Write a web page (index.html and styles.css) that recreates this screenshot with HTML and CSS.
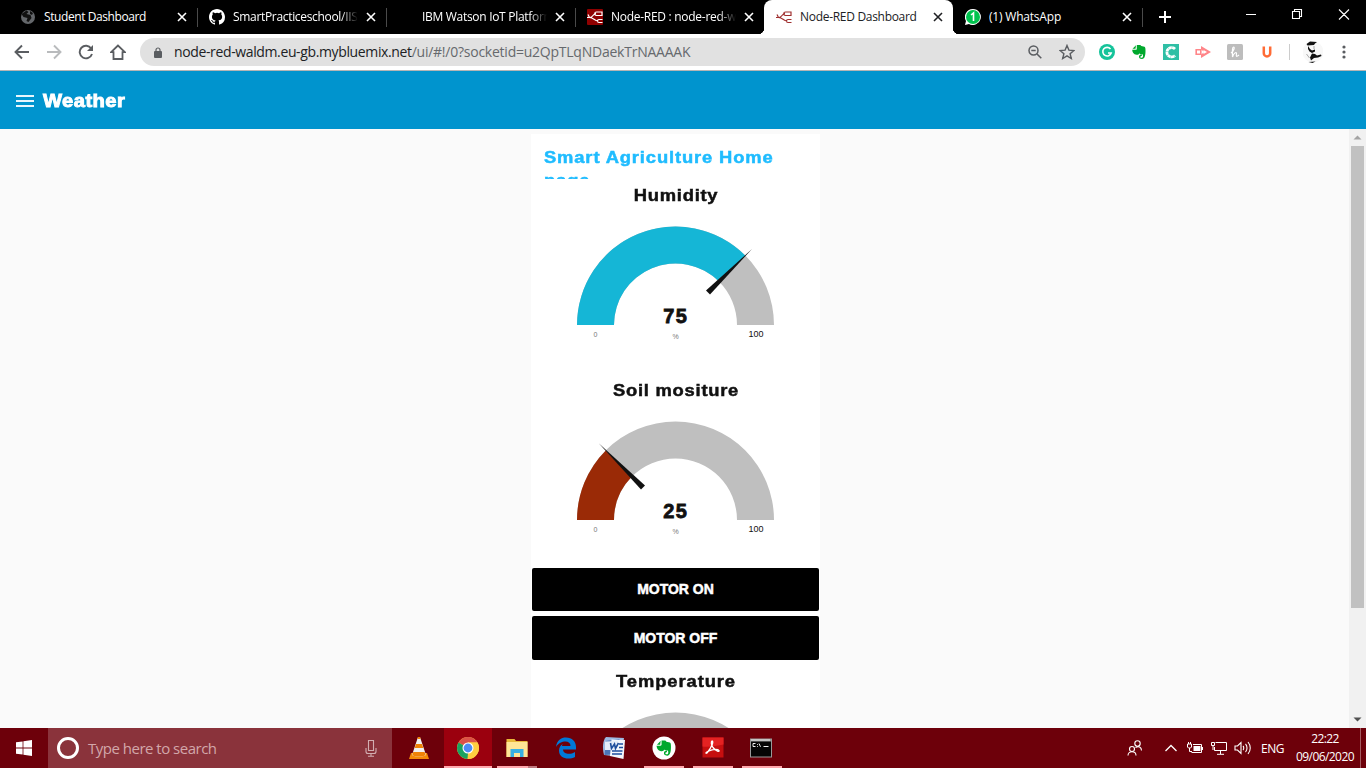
FILE: index.html
```html
<!DOCTYPE html>
<html lang="en">
<head>
<meta charset="utf-8">
<title>Node-RED Dashboard</title>
<link rel="stylesheet" href="styles.css">
</head>
<body>
<svg class="defs" width="0" height="0">
  <symbol id="x" viewBox="0 0 10 10"><path d="M1 1l8 8M9 1L1 9" stroke="currentColor" stroke-width="1.6" fill="none"/></symbol>
  <symbol id="nodered" viewBox="0 0 16 16"><path d="M0 8.500h3c3 0 3-4 6-4M1 5.500l1.500 3C7 8.500 7 12 11 12M9.500 3h5.500v3.500H9.500a1.750 1.750 0 010-3.500zM15.500 10.500H12a1.500 1.500 0 000 3h3.500" fill="none" stroke="currentColor" stroke-width="1.200"/></symbol>
  <symbol id="elephant" viewBox="0 0 16 16"><path d="M5 1.200L1.500 4.800h3zM5.800 1h3.500l1 1 3.200.8c.8.3 1 1.500 1 4 0 4-.5 8.200-3.500 8.200-2.500 0-3-1.200-3-2.400 0-1.500 1-2.100 2.800-2.100v1.400c-1 0-1.400.3-1.400 1s.5.800 1.300.8c1.100 0 1.300-.8 1.300-2 0-1-.3-1.500-.8-1.500-1.500 0-2.700-.2-3-1-.3 1-1 1.800-2.700 1.600C2.500 10.500 1.300 8 1.200 5.700h3.600c.7 0 1-.4 1-1z"/></symbol>
</svg>

<header class="tabs">
  <div class="tab">
    <svg class="fav" viewBox="0 0 16 16"><circle cx="8" cy="8" r="7" fill="#64676b"/><path d="M1.500 5l5-3.500 2 1.500-2 2 4 1 1 3-3 4-2-1 1-3-4-1zM10 2l3 2-1 2-2-1z" fill="#111"/></svg>
    <span class="label t1">Student Dashboard</span><svg class="close"><use href="#x"/></svg>
  </div>
  <div class="tab">
    <svg class="fav" viewBox="0 0 16 16"><path fill="#fff" d="M8 0C3.580 0 0 3.580 0 8c0 3.540 2.290 6.530 5.470 7.590.4.070.55-.17.55-.38v-1.490c-2.010.37-2.530-.49-2.690-.94-.09-.23-.48-.94-.82-1.130-.28-.15-.68-.52-.01-.53.63-.01 1.080.58 1.230.82.72 1.210 1.870.87 2.330.66.07-.52.28-.87.51-1.070-1.780-.2-3.640-.89-3.640-3.950 0-.87.31-1.590.82-2.150-.08-.2-.36-1.020.08-2.120 0 0 .67-.21 2.200.82a7.600 7.600 0 014 0c1.530-1.040 2.200-.82 2.200-.82.44 1.100.16 1.920.08 2.120.51.560.82 1.270.82 2.150 0 3.070-1.870 3.750-3.650 3.950.29.25.54.730.54 1.480v2.190c0 .21.150.460.55.380A8.010 8.010 0 0016 8c0-4.420-3.580-8-8-8z"/></svg>
    <span class="label fade t2">SmartPracticeschool/IISPS</span><svg class="close"><use href="#x"/></svg>
  </div>
  <div class="tab">
    <span class="fav"></span>
    <span class="label fade t3">IBM Watson IoT Platform</span><svg class="close"><use href="#x"/></svg>
  </div>
  <div class="tab last-before">
    <svg class="fav nr" viewBox="0 0 16 16"><rect width="16" height="16" rx="1" fill="#8f0000"/><use href="#nodered"/></svg>
    <span class="label fade t4">Node-RED : node-red-waldm</span><svg class="close"><use href="#x"/></svg>
  </div>
  <div class="tab active">
    <svg class="fav" viewBox="0 0 16 16"><use href="#nodered"/></svg>
    <span class="label t5">Node-RED Dashboard</span><svg class="close"><use href="#x"/></svg>
  </div>
  <div class="tab">
    <svg class="fav" viewBox="0 0 16 16"><path d="M8 0a8 8 0 11-4 15L0 16l1-4A8 8 0 018 0z" fill="#fff"/><circle cx="8" cy="8" r="7" fill="#00c34e"/><path d="M6 6l2.500-2v8" fill="none" stroke="#fff" stroke-width="1.600"/></svg>
    <span class="label t6">(1) WhatsApp</span><svg class="close"><use href="#x"/></svg>
  </div>
  <svg class="plus" viewBox="0 0 12 12"><path d="M6 0v12M0 6h12" stroke="#fff" stroke-width="2"/></svg>
  <svg class="winctl" viewBox="0 0 106 12"><g fill="none" stroke="#fff" stroke-width="1.100"><path d="M0 6.500h10M46.500 3.500h7v7h-7zM48.500 3.500v-2h7v7h-2M93 1.500l10 10M103 1.500l-10 10"/></g></svg>
</header>

<nav class="toolbar">
  <svg class="nav" viewBox="0 0 16 16"><path d="M15 8H2M8 1.500L1.500 8 8 14.500" fill="none" stroke="#5a5d61" stroke-width="1.900"/></svg>
  <svg class="nav" viewBox="0 0 16 16"><path d="M1 8h13M8 1.500L14.500 8 8 14.500" fill="none" stroke="#b9bbbd" stroke-width="1.900"/></svg>
  <svg class="nav" viewBox="0 0 16 16"><path d="M13.200 4.500A6.300 6.300 0 1014 10" fill="none" stroke="#5a5d61" stroke-width="1.900"/><path d="M15 1v6H9z" fill="#5a5d61"/></svg>
  <svg class="nav" viewBox="0 0 16 16"><path d="M8 1.500L1.200 8.200H3.500V15h9V8.200h2.300z" fill="none" stroke="#5a5d61" stroke-width="1.800"/></svg>
  <div class="omnibox">
    <svg class="lock" viewBox="0 0 8 11"><rect y="4" width="8" height="7" rx="1" fill="#5a5d61"/><path d="M2 4.500V3a2 2 0 014 0v1.500" fill="none" stroke="#5a5d61" stroke-width="1.200"/></svg>
    <span class="url"><b>node-red-waldm.eu-gb.mybluemix.net</b>/ui/#!/0?socketid=u2QpTLqNDaekTrNAAAAK</span>
    <svg class="zoomi" viewBox="0 0 14 14"><g fill="none" stroke="#5a5d61" stroke-width="1.500"><circle cx="5.500" cy="5.500" r="4.500"/><path d="M9 9l4.300 4.300M3.300 5.500h4.400"/></g></svg>
    <svg class="star" viewBox="0 0 16 16"><path d="M8 1.500l1.900 4.600 5 .4-3.800 3.200 1.200 4.800L8 11.900l-4.300 2.600 1.200-4.800L1.100 6.500l5-.4z" fill="none" stroke="#5a5d61" stroke-width="1.400"/></svg>
  </div>
  <div class="exts">
    <svg viewBox="0 0 16 16"><circle cx="8" cy="8" r="8" fill="#15c39a"/><path d="M11.500 5A4.300 4.300 0 1012.200 9H9" fill="none" stroke="#fff" stroke-width="1.600"/></svg>
    <svg viewBox="0 0 16 16" fill="#00a82d"><use href="#elephant"/></svg>
    <svg viewBox="0 0 16 16"><rect width="16" height="16" fill="#2fbfa5"/><path d="M12 5a4.700 4.700 0 100 6.500" fill="none" stroke="#fff" stroke-width="2.800" stroke-dasharray="3.200 .3"/></svg>
    <svg viewBox="0 0 16 16"><path d="M1.200 5.700h4.600v4.600H1.200z" fill="none" stroke="#ff8589" stroke-width="1.600"/><path d="M6 2l10 6-10 6v-3.500L9.500 8 6 5.500z" fill="#ff8589"/><path d="M8.500 6l3.500 2-3.500 2z" fill="#fff"/></svg>
    <svg viewBox="0 0 16 16"><rect width="16" height="16" rx="1.500" fill="#bdbdbd"/><path d="M4 9c3-2 4-6 2.500-6S5.500 9 5.500 13c1-4 4.500-6 4-3-.4 2-.6 3.500 2.500 1" fill="none" stroke="#fff" stroke-width="1.200"/></svg>
    <svg viewBox="0 0 16 16"><path d="M4.800 2.500v6.700a3.200 3.200 0 006.400 0V2.500" fill="none" stroke="#ff6b35" stroke-width="2.500"/></svg>
  </div>
  <span class="bar"></span>
  <svg class="avatar" viewBox="0 0 20 22"><circle cx="10" cy="11" r="10.500" fill="#f8f8f8"/><path d="M3.500 3L7 .500l7 .5-2 1.500-1 1.500-6.500.5zM5 5v3l1.500 2.500L9 12l3-1.500V8.500L9 9.500 7 8zM9 12.500l3 .5 2 1.500 4-1 .5 1.500-3.500 1.500-4 .5-3 2.500-1-3zM5.500 21l7-.5-3 1.500z" fill="#111"/><path d="M3.500 13l3 4M11 5v3" stroke="#aaa" fill="none"/></svg>
  <svg class="dots" viewBox="0 0 4 14"><g fill="#5a5d61"><circle cx="2" cy="2" r="1.600"/><circle cx="2" cy="7" r="1.600"/><circle cx="2" cy="12" r="1.600"/></g></svg>
</nav>

<div class="appbar">
  <svg class="burger" viewBox="0 0 18 12"><path d="M0 1h18M0 6h18M0 11h18" stroke="#e8f6fd" stroke-width="1.800"/></svg>
  <h1>Weather</h1>
</div>

<main class="content">
  <section class="card">
    <p class="cardtitle">Smart Agriculture Home page</p>
    <div class="gauge">
      <h2>Humidity</h2>
      <svg viewBox="0 0 289 150"><path class="track" d="M46 115a98.500 98.500 0 01197 0H206a61.500 61.500 0 00-123 0z"/><path fill="#15b6d6" d="M46 115A98.500 98.500 0 01214.200 45.400L188 71.500A61.500 61.500 0 0083 115z"/><path class="needle" d="M221 39L179 84.500l-4-4z"/>
      <text class="val" x="144.800" y="113">75</text><text class="unit" x="144.500" y="129">%</text><text class="min" x="64.500" y="127">0</text><text class="max" x="225" y="127">100</text></svg>
    </div>
    <div class="gauge">
      <h2>Soil mositure</h2>
      <svg viewBox="0 0 289 150"><path class="track" d="M46 115a98.500 98.500 0 01197 0H206a61.500 61.500 0 00-123 0z"/><path fill="#9a2a06" d="M46 115A98.500 98.500 0 0174.800 45.400L101 71.500A61.500 61.500 0 0083 115z"/><path class="needle" d="M68 38.500l46 42-4 4z"/>
      <text class="val" x="144.800" y="113">25</text><text class="unit" x="144.500" y="129">%</text><text class="min" x="64.500" y="127">0</text><text class="max" x="225" y="127">100</text></svg>
    </div>
    <button class="on">MOTOR ON</button>
    <button class="off">MOTOR OFF</button>
    <div class="gauge third">
      <h2>Temperature</h2>
      <svg viewBox="0 0 289 150"><path class="track" d="M46 115a98.500 98.500 0 01197 0H206a61.500 61.500 0 00-123 0z"/></svg>
    </div>
  </section>
  <div class="scroll">
    <svg viewBox="0 0 17 17"><path d="M4.500 10.500h8l-4-4z" fill="#a3a3a3"/></svg>
    <div class="thumb"></div>
    <svg viewBox="0 0 17 17"><path d="M4.500 6.500h8l-4 4z" fill="#505050"/></svg>
  </div>
</main>

<footer class="taskbar">
  <div class="start"><svg viewBox="0 0 16 16"><path d="M0 2.300L6.600 1.400v6.200H0zM7.400 1.300L16 0v7.600H7.400zM0 8.400h6.600v6.200L0 13.700zM7.400 8.400H16V16l-8.600-1.300z" fill="#fff"/></svg></div>
  <div class="search">
    <span class="ring"></span><span class="hint">Type here to search</span>
    <svg class="mic" viewBox="0 0 12 17"><path d="M3.500.5h5v10h-5zM1 8v3.500c0 1.500 1 2 2 2h6c1 0 2-.5 2-2V8M6 13.500v2.500M3 16.300h6" fill="none" stroke="#d2aeb1" stroke-width="1.100"/></svg>
  </div>
  <div class="apps">
    <div class="app"><svg viewBox="0 0 24 24"><path d="M4 17h16l2 6H2z" fill="#f58a07"/><path d="M11 1h2l6 18c-3 2-11 2-14 0z" fill="#f1f1f1"/><path d="M10.500 3L11 1h2l.6 2zM9 8h6l1.300 4H7.700zM6.300 16h11.300l1 3c-3 2-10.300 2-13.300 0z" fill="#f08206"/></svg></div>
    <div class="app current open"><svg viewBox="0 0 24 24"><circle cx="12" cy="12" r="11" fill="#ffcd40"/><path d="M12 12L2.500 6.500A11 11 0 0121.500 6.500H12z" fill="#db5148"/><path d="M2.500 6.500A11 11 0 0011.500 23L17 14.500 12 12z" fill="#1aa260"/><path d="M21.500 6.500H12V17L11.500 23A11 11 0 0021.500 6.500z" fill="#ffcd40"/><circle cx="12" cy="12" r="5.500" fill="#fff"/><circle cx="12" cy="12" r="4.400" fill="#4c8bf5"/></svg></div>
    <div class="app multi"><svg viewBox="0 0 24 24"><path d="M1.500 3h8l1.500 2h11.500v16h-21z" fill="#e9b93a"/><path d="M1.500 6h21v15h-21z" fill="#ffe596"/><path d="M5.500 21v-8h13v8h-3.500v-4H9v4z" fill="#38b0e3"/></svg></div>
    <div class="app"><svg viewBox="0 0 24 24"><path d="M2 11C3 4 7 1.500 12 1.500c6 0 10 4 10 9.500v2.500H9c.3 5 7.500 5.500 12 2.500v5c-6 3-16 2-16-6.500 0-3 1.700-5.500 4-6.800C8 8.800 8 10 8 10h8.500c0-3-2-4.500-5-4.500C8 5.500 4.500 7 2 11z" fill="#0078d7"/></svg></div>
    <div class="app word"><svg viewBox="0 0 24 24"><path d="M4 1l18 1-3 19-17-2C0 11 1 4 4 1z" fill="#9db8e0"/><path d="M3.500 5l14-2-1 15-14 1z" fill="#4a74b8"/><path d="M9.500 3.500L23 4l-1.500 19L8 20z" fill="#f2f6fc"/><path d="M3 5.500L16 5l-1.500 9L3 14z" fill="#e4ecf8"/><path d="M8.500 7l1 5.500L12.500 8l1 4.500L16.500 7M17 8h4M17 11.500h4M10 15h10.500M10 18h10" fill="none" stroke="#1c4d9d" stroke-width="1.600"/></svg></div>
    <div class="app open narrow"><svg viewBox="0 0 24 24"><circle cx="12" cy="12" r="11.500" fill="#fff"/><g transform="translate(3.300 3.500) scale(1.080)" fill="#00a82d"><use href="#elephant" width="16" height="16"/></g></svg></div>
    <div class="app open narrow"><svg viewBox="0 0 24 24"><path d="M1.500 1.500h21v20h-21z" fill="#c60f0f"/><path d="M1.500 1.500h21v7c-7 1-14 3-21 2z" fill="#e52222"/><path d="M11 5c2 0 0 6-5 12-2 1-1-1 2-2 4-2 9-2 10-.5s-3 1-6-3c-2-3-2-6-1-6.500z" fill="none" stroke="#fff" stroke-width="1.300"/></svg></div>
    <div class="app open narrow cmd"><svg viewBox="0 0 24 24"><path d="M1 2.500h22v19H1z" fill="#999"/><path d="M2 5.500h20V20.500H2z" fill="#050505"/><path d="M2 4h19" stroke="#eee"/><path d="M6.500 7.500H4v3h2.500M8.500 8v.8M8.500 10v.8M10 7.500l1.500 3.300M14.500 10.500h5" stroke="#eee" fill="none"/></svg></div>
  </div>
  <div class="tray">
    <svg class="people" viewBox="0 0 16 16"><g fill="none" stroke="#fff" stroke-width="1.100"><circle cx="10.500" cy="3.500" r="2.700"/><circle cx="5" cy="9" r="2.500"/><path d="M1 15.500c0-5 8-5 8 0M8.500 7.500c3-2 6-.5 6 3"/></g></svg>
    <svg class="chev" viewBox="0 0 14 14"><path d="M1.500 10L7 4.500l5.500 5.500" fill="none" stroke="#fff" stroke-width="1.300"/></svg>
    <svg class="bat" viewBox="0 0 16 14"><path d="M6 3.500h8.500v8H4.500" fill="none" stroke="#fff"/><path d="M6.500 5h7v5h-7zM15 6h1v3h-1z" fill="#fff"/><path d="M.5 3h4v3l-1 1h-2l-1-1zM1.500 1v2M3.500 1v2M2.500 7v3.500H5" fill="none" stroke="#fff"/></svg>
    <svg class="net" viewBox="0 0 16 14"><path d="M4.500 1.500h11v8h-12V6M9.500 10v3M6 13.300h7M.5 1.500h3v3h-3zM2 5v4" fill="none" stroke="#fff"/></svg>
    <svg class="vol" viewBox="0 0 18 14"><path d="M1 5h2.500L7 1.500v11L3.500 9H1zM9 5c1 1 1 3 0 4M11.500 3c2 2 2 6 0 8M14 1c3 3.500 3 8.500 0 12" fill="none" stroke="#fff" stroke-width="1.100"/></svg>
    <span class="eng">ENG</span>
    <div class="clock"><span class="time">22:22</span><span class="date">09/06/2020</span></div>
    <span class="peek"></span>
  </div>
</footer>
</body>
</html>
```
FILE: styles.css
```css
* { box-sizing: border-box; }
body { margin: 0; width: 1366px; height: 768px; overflow: hidden; display: flex; flex-direction: column; font-family: "Open Sans", "Noto Sans", sans-serif; background: #fafafa; }
svg { display: block; flex: none; }
.defs { position: absolute; }

.tabs { height: 34px; flex: none; background: #000; display: flex; padding-left: 8px; color: #fff; }
.tab { width: 189px; display: flex; align-items: center; padding-left: 12px; position: relative; flex: none; }
.tab::after { content: ""; position: absolute; right: -1px; top: 8px; height: 19px; width: 1px; background: #4a4a4a; }
.tab.active::after, .last-before::after { display: none; }
.fav { width: 16px; height: 16px; flex: none; margin-right: 8px; }
.nr { color: #fff; }
.active .fav { color: #a03030; }
.label { width: 125px; flex: none; white-space: nowrap; overflow: hidden; font-size: 12px; line-height: 18px; }
.fade { -webkit-mask-image: linear-gradient(90deg, #000 86%, transparent); mask-image: linear-gradient(90deg, #000 86%, transparent); }
.close { width: 10px; height: 10px; margin-left: 8px; }
.active { background: #fff; color: #202124; border-radius: 8px 8px 0 0; }
.active::before { content: ""; position: absolute; left: -6px; right: -6px; bottom: 0; height: 6px; background: radial-gradient(circle at 0 0, transparent 6px, #fff 6.500px) left / 6px 6px no-repeat, radial-gradient(circle at 100% 0, transparent 6px, #fff 6.500px) right / 6px 6px no-repeat; }
.t1 { letter-spacing: -.42px; }
.t2 { letter-spacing: -.32px; }
.t3 { letter-spacing: -.3px; }
.t4 { letter-spacing: -.28px; }
.t5 { letter-spacing: -.3px; }
.t6 { letter-spacing: -.2px; }
.plus { width: 12px; height: 12px; margin: 11px 0 0 17px; }
.winctl { width: 106px; height: 12px; margin: 8px 0 0 75px; }

.toolbar { height: 37px; flex: none; background: #fff; display: flex; align-items: center; padding-left: 14px; border-bottom: 1px solid #b5b5b5; }
.nav { width: 16px; height: 16px; margin-right: 16px; }
.omnibox { width: 945px; height: 28px; border-radius: 14px; background: #e1e1e1; display: flex; align-items: center; padding-left: 14px; margin-left: -2px; }
.lock { width: 8px; height: 11px; }
.url { width: 854px; margin-left: 12px; font-size: 14px; line-height: 20px; color: #66696d; white-space: nowrap; letter-spacing: -.24px; }
.url b { font-weight: 400; color: #202124; letter-spacing: -.37px; }
.zoomi { width: 14px; height: 14px; }
.star { width: 16px; height: 16px; margin-left: 17px; }
.exts { display: flex; gap: 16px; margin-left: 14px; }
.exts svg { width: 16px; height: 16px; }
.bar { width: 1px; height: 16px; background: #ccc; margin-left: 14px; }
.avatar { width: 20px; height: 22px; margin-left: 13px; }
.dots { width: 4px; height: 14px; margin-left: 19px; }

.appbar { height: 58px; flex: none; background: #0094ce; display: flex; align-items: center; padding: 2px 0 0 16px; }
.burger { width: 18px; height: 12px; }
h1, h2, .cardtitle, button, .val { font-family: "Liberation Sans", Arial, sans-serif; font-weight: 700; }
h1 { margin: 0 0 0 9px; font-size: 18px; color: #fff; -webkit-text-stroke: .9px #fff; letter-spacing: .4px; transform: scaleX(1.120); transform-origin: left; }

.content { height: 599px; flex: none; display: flex; position: relative; overflow: hidden; padding: 5px 0 0 531px; }
.card { width: 289px; flex: none; background: #fff; }
.cardtitle { margin: 0; height: 45px; overflow: hidden; padding: 12px 22px 0 13px; font-size: 17px; line-height: 23px; color: #1fbcff; letter-spacing: .8px; -webkit-text-stroke: .5px #1fbcff; transform: scaleX(1.080); transform-origin: 13px 0; }
.gauge { height: 195px; }
h2 { margin: 0; height: 31px; line-height: 33px; font-size: 17px; text-align: center; color: #111; letter-spacing: .7px; padding-left: 1px; -webkit-text-stroke: .5px #111; transform: scaleX(1.080); }
.third h2 { letter-spacing: .85px; }
.gauge svg { width: 289px; height: 150px; }
.track { fill: #bfbfbf; }
.needle { fill: #111; }
text { text-anchor: middle; }
.val { font-size: 20px; fill: #111; stroke: #111; stroke-width: .8px; letter-spacing: 1.300px; }
.unit, .min { font: 7px "Liberation Sans", sans-serif; fill: #777; }
.max { font: 9px "Liberation Sans", sans-serif; fill: #111; }
button { display: block; width: 287px; height: 43px; margin: 0 1px; border: 0; padding: 0 0 1px; border-radius: 2px; background: #000; color: #fff; font-size: 14px; -webkit-text-stroke: .5px #fff; }
.on { margin-top: -1px; }
.off { height: 44px; margin: 5px 1px; padding: 0; }
.scroll { position: absolute; right: 0; top: 0; width: 17px; height: 599px; background: #f1f1f1; display: flex; flex-direction: column; justify-content: space-between; }
.scroll svg { width: 17px; height: 17px; }
.thumb { width: 13px; height: 462px; margin: 0 2px 103px; background: #c1c1c1; }

.taskbar { height: 40px; flex: none; background: #6d000a; display: flex; color: #fff; }
.start { width: 48px; padding: 12px 16px; }
.start svg { width: 16px; height: 16px; }
.search { width: 344px; background: #8a333b; display: flex; align-items: center; padding-left: 9px; }
.ring { width: 22px; height: 22px; border: 3px solid #fff; border-radius: 50%; }
.hint { width: 269px; margin-left: 9px; font-size: 15px; color: #d2a7aa; white-space: nowrap; letter-spacing: -.5px; }
.mic { width: 12px; height: 17px; margin-left: 8px; }
.apps { display: flex; gap: 1px; margin-left: 3px; }
.app { width: 48px; padding: 8px 12px; position: relative; }
.app svg { width: 24px; height: 24px; }
.word svg, .cmd svg { margin-left: -1px; }
.current { background: #9b000e; }
.open::after, .multi::after { content: ""; position: absolute; left: 0; right: 0; bottom: 0; height: 2px; background: #ffa8ad; }
.narrow::after { left: 4px; right: 4px; }
.multi::after { left: 4px; right: 4px; background: linear-gradient(90deg, #ffa8ad 31px, #c07a80 31px); }
.tray { display: flex; align-items: center; margin-left: 341px; }
.people { width: 16px; height: 16px; }
.chev { width: 14px; height: 14px; margin-left: 21px; }
.bat { width: 16px; height: 14px; margin-left: 9px; }
.net { width: 16px; height: 14px; margin-left: 8px; }
.vol { width: 18px; height: 14px; margin-left: 7px; }
.eng { font-size: 12px; margin-left: 9px; width: 23px; letter-spacing: -.5px; }
.clock { width: 60px; margin-left: 11px; display: flex; flex-direction: column; align-items: center; font-size: 12px; line-height: 18px; letter-spacing: -.58px; }
.peek { width: 1px; height: 40px; margin-left: 5px; background: #a55a60; }
```
